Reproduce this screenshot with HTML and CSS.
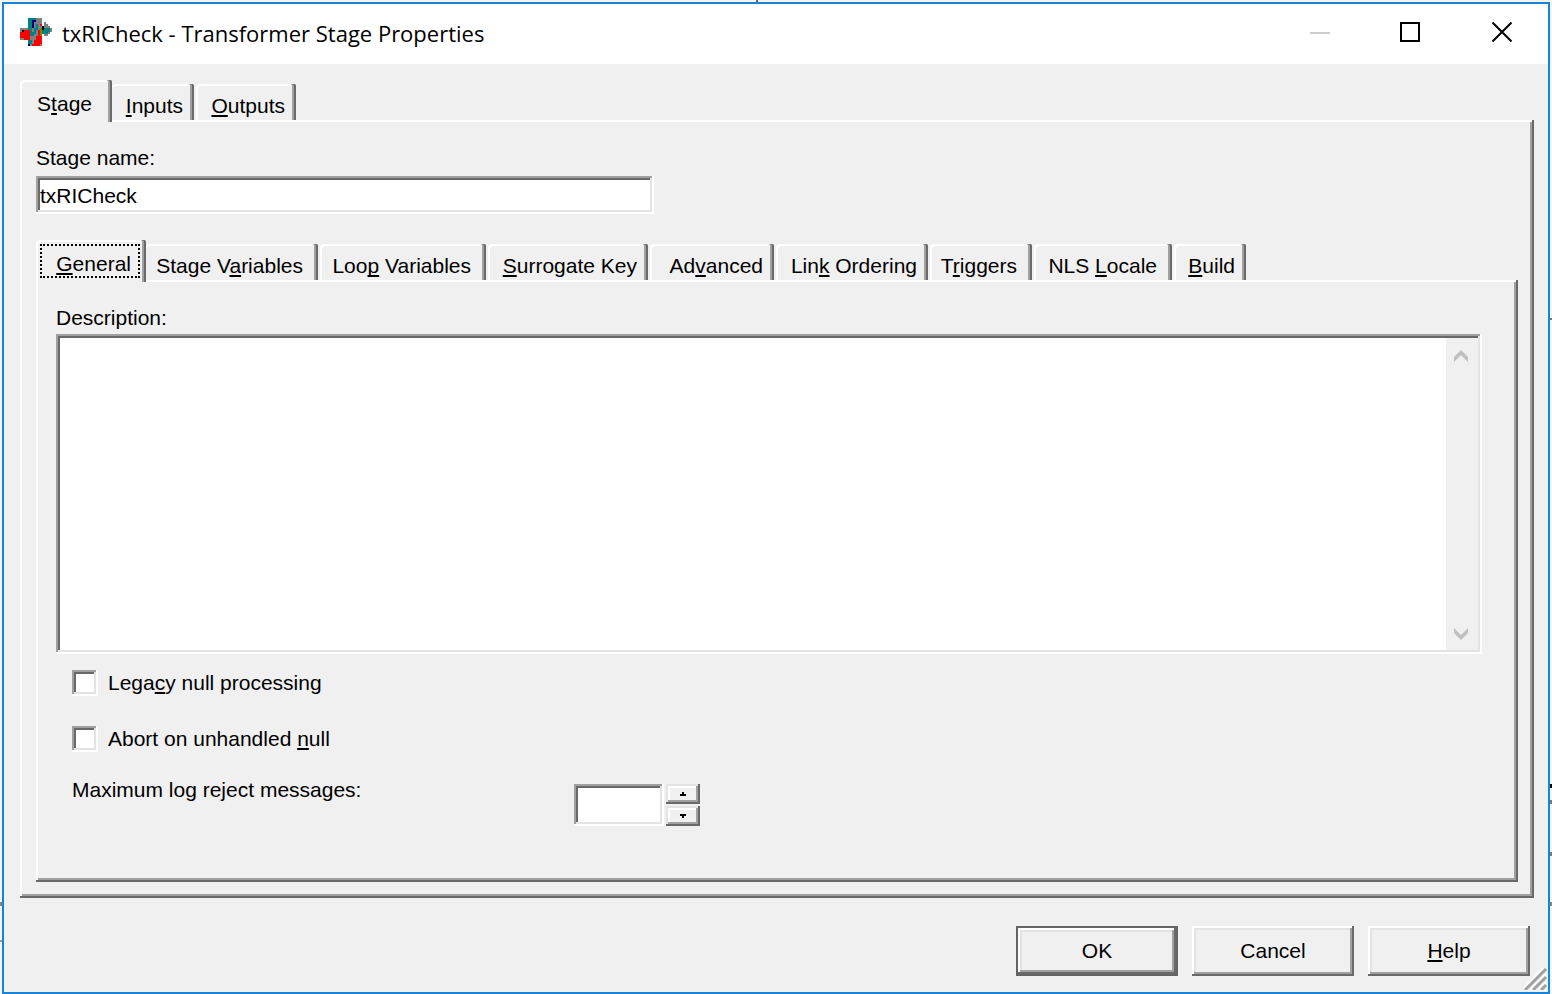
FILE: index.html
```html
<!DOCTYPE html>
<html lang="en">
<head>
<meta charset="utf-8">
<title>txRICheck - Transformer Stage Properties</title>
<link rel="stylesheet" href="styles.css">
</head>
<body>
<main class="window">
  <header class="titlebar">
    <svg class="app-icon" viewBox="0 0 16 14" shape-rendering="crispEdges" aria-hidden="true">
      <path fill="#808080" d="M0 5h5v6H0zM7 0h4v14H4V9h2V5h1zM12 2h1v1h1v1h1v1h1v2h-1v1h-1v1h-2z"/>
      <path fill="#008080" d="M4 0h4v1H7v3H6v3h1v2H5v1H4zM8 3h1v3H8v2H7V5h1zM4 10h1v1h1v2H4zM11 5h4v2h-1v1h-3z"/>
      <path fill="#f00" d="M1 6h4v5H2v-1H0V7h1zM10 3h1v1h-1zM9 6h1v3h1v4h-1v1H6v-1h1v-2h1V9h1z"/>
      <path fill="#000080" d="M6 1h2v1H7v3H6zM4 13h1v1H4z"/>
      <path fill="#808000" d="M10 5h1v4h-1z"/>
      <path fill="#000" d="M11 4h1v2h-1zM1 6h1v1H1z"/>
    </svg>
    <h1 class="title">txRICheck - Transformer Stage Properties</h1>
    <div class="caption-buttons">
      <button type="button" aria-label="Minimize" disabled><svg width="20" height="20" viewBox="0 0 20 20"><path fill="#ccc" d="M0 10h20v2H0z"/></svg></button>
      <button type="button" aria-label="Maximize"><svg width="20" height="20" viewBox="0 0 20 20"><path fill="none" stroke="#000" stroke-width="2" d="M1 1h18v18H1z"/></svg></button>
      <button type="button" aria-label="Close"><svg width="20" height="20" viewBox="0 0 20 20"><path fill="none" stroke="#000" stroke-width="2" d="M0.500 0.500l19 19M19.500 0.500l-19 19"/></svg></button>
    </div>
  </header>

  <div class="content">
    <div class="tabs" role="tablist">
      <button type="button" role="tab" class="tab active tab-stage" aria-selected="true">S<u>t</u>age</button>
      <button type="button" role="tab" class="tab after-active tab-inputs"><u>I</u>nputs</button>
      <button type="button" role="tab" class="tab tab-outputs"><u>O</u>utputs</button>
    </div>

    <section class="panel outer">
      <label class="label" for="stage-name">Stage name:</label>
      <input class="sunken stage-name" id="stage-name" type="text" value="txRICheck">

      <div class="tabs inner-tabs" role="tablist">
        <button type="button" role="tab" class="tab active focus tab-general roomy" aria-selected="true"><u>G</u>eneral</button>
        <button type="button" role="tab" class="tab after-active tab-variables roomy">Stage V<u>a</u>riables</button>
        <button type="button" role="tab" class="tab tab-loop roomy">Loo<u>p</u> Variables</button>
        <button type="button" role="tab" class="tab tab-key"><u>S</u>urrogate Key</button>
        <button type="button" role="tab" class="tab tab-advanced">Ad<u>v</u>anced</button>
        <button type="button" role="tab" class="tab tab-link">Lin<u>k</u> Ordering</button>
        <button type="button" role="tab" class="tab tab-triggers roomy">T<u>r</u>iggers</button>
        <button type="button" role="tab" class="tab tab-nls roomy">NLS <u>L</u>ocale</button>
        <button type="button" role="tab" class="tab tab-build"><u>B</u>uild</button>
      </div>

      <section class="panel inner">
        <label class="label" for="description">Description:</label>
        <div class="sunken description">
          <textarea id="description"></textarea>
          <div class="scrollbar">
            <svg width="16" height="12" viewBox="0 0 16 12"><path fill="#bfbfbf" d="M7 0l7 7v5L7 5l-7 7V7z"/></svg>
            <svg width="16" height="12" viewBox="0 0 16 12"><path fill="#bfbfbf" d="M7 12l7-7V0L7 7 0 0v5z"/></svg>
          </div>
        </div>
        <div class="check-row">
          <input class="sunken check" id="legacy" type="checkbox">
          <label for="legacy">Lega<u>c</u>y null processing</label>
        </div>
        <div class="check-row">
          <input class="sunken check" id="abort" type="checkbox">
          <label for="abort">Abort on unhandled <u>n</u>ull</label>
        </div>
        <div class="max-row">
          <label class="max-label" for="max-log">Maximum log reject messages:</label>
          <input class="sunken max-input" id="max-log" type="text">
          <div class="spinner">
            <button type="button" aria-label="Increase"><svg width="6" height="4" viewBox="0 0 6 4"><path d="M2 0h2v2h2v2H0V2h2z"/></svg></button>
            <button type="button" aria-label="Decrease"><svg width="6" height="4" viewBox="0 0 6 4"><path d="M0 0h6v2H4v2H2V2H0z"/></svg></button>
          </div>
        </div>
      </section>
    </section>

    <footer class="actions">
      <button type="button" class="button default">OK</button>
      <button type="button" class="button">Cancel</button>
      <button type="button" class="button"><u>H</u>elp</button>
    </footer>
  </div>
  <svg class="grip" width="24" height="22" viewBox="0 0 24 22" aria-hidden="true">
    <path stroke="#fff" stroke-width="2" d="M-1 21L21 -1M7 21L22 6M15 21L22 14"/>
    <path stroke="#a0a0a0" stroke-width="3" d="M1 22L22 1M9 22L22 9M17 22L22 17"/>
  </svg>
</main>
</body>
</html>
```
FILE: styles.css
```css
* {
  box-sizing: border-box;
}

body {
  margin: 0;
  background:
    linear-gradient(#666, #666) 756px 0 / 2px 2px no-repeat,
    linear-gradient(#000, #000) right 784px / 2px 4px no-repeat,
    linear-gradient(#777, #777) right 318px / 2px 2px no-repeat,
    linear-gradient(#777, #777) right 800px / 2px 4px no-repeat,
    linear-gradient(#777, #777) right 852px / 2px 4px no-repeat,
    linear-gradient(#888, #888) right 902px / 2px 4px no-repeat,
    linear-gradient(#888, #888) left 902px / 2px 4px no-repeat,
    linear-gradient(#999, #999) left 940px / 2px 2px no-repeat,
    #f4f4f4;
  color: #000;
  font: 21px/24px "Liberation Sans", Arial, sans-serif;
}

button,
input,
textarea {
  margin: 0;
  border: 0;
  padding: 0;
  border-radius: 0;
  background: none;
  color: inherit;
  font: inherit;
  outline: 0;
}

u {
  text-decoration-thickness: 2px;
  text-underline-offset: 2px;
  text-decoration-skip-ink: none;
}

.window {
  position: relative;
  display: flex;
  flex-direction: column;
  min-height: calc(100vh - 2px);
  margin: 2px 2px 0;
  border: 2px solid #1883d7;
  background: #f0f0f0;
}

.titlebar {
  display: flex;
  align-items: center;
  height: 60px;
  padding: 0 0 4px 16px;
  background: #fff;
}

.app-icon {
  width: 32px;
  height: 28px;
}

.title {
  flex: 1;
  margin: 0 0 0 10px;
  padding-top: 2px;
  font: 22px/30px "Open Sans", "Noto Sans", sans-serif;
}

.caption-buttons {
  display: flex;
}

.caption-buttons button {
  display: grid;
  place-items: center;
  width: 92px;
  height: 56px;
}

.caption-buttons button:first-child {
  width: 88px;
}

.content {
  display: flex;
  flex: 1;
  flex-direction: column;
  padding: 16px 14px 16px 16px;
}

.tabs {
  display: flex;
  align-items: flex-end;
  gap: 2px;
  height: 40px;
}

.tab {
  position: relative;
  height: 36px;
  padding: 8px 11px 0 0;
  border-radius: 4px 2px 0 0;
  background: #f0f0f0;
  box-shadow: inset -2px 0 #696969, inset -4px 0 #a0a0a0, inset 2px 2px #fff;
  line-height: 28px;
  text-align: right;
  white-space: nowrap;
}

.tab.roomy {
  padding-right: 15px;
}

.tab.after-active {
  margin-left: -2px;
  box-shadow: inset -2px 0 #696969, inset -4px 0 #a0a0a0, inset 0 2px #fff;
}

.tab.active {
  z-index: 1;
  height: 42px;
  margin-bottom: -2px;
  padding-top: 10px;
  padding-bottom: 4px;
}

.tab.tab-stage {
  width: 92px;
  padding-right: 20px;
}

.tab-inputs { width: 82px; }
.tab-outputs { width: 100px; }
.tab-general { width: 110px; }
.tab-variables { width: 172px; }
.tab-loop { width: 166px; }
.tab-key { width: 160px; }
.tab-advanced { width: 124px; }
.tab-link { width: 152px; }
.tab-triggers { width: 102px; }
.tab-nls { width: 138px; }
.tab-build { width: 72px; }

.tab.focus::after {
  position: absolute;
  inset: 4px 6px 4px 4px;
  border: 2px dotted #000;
  content: "";
}

.panel {
  display: flex;
  flex: 1;
  flex-direction: column;
  align-items: flex-start;
  box-shadow: inset -2px -2px #696969, inset 2px 2px #fff, inset -4px -4px #a0a0a0;
}

.outer {
  padding: 26px 16px 16px;
}

.inner {
  align-self: stretch;
  padding: 26px 36px 56px 20px;
}

.sunken {
  background: #fff;
  box-shadow: inset -2px -2px #fff, inset 2px 2px #a0a0a0, inset -4px -4px #e3e3e3, inset 4px 4px #696969;
}

.stage-name {
  width: 618px;
  height: 38px;
  margin-top: 6px;
  padding: 2px 4px 0;
}

.inner-tabs {
  margin-top: 26px;
}

.description {
  display: flex;
  flex: 1;
  align-self: stretch;
  margin-top: 4px;
  padding: 4px;
}

.description textarea {
  flex: 1;
  resize: none;
}

.scrollbar {
  display: flex;
  flex-direction: column;
  align-items: center;
  justify-content: space-between;
  width: 32px;
  padding: 12px 0 10px;
  background: #f0f0f0;
}

.check-row {
  display: flex;
  align-items: center;
  gap: 10px;
  margin: 16px 0 0 16px;
}

.check-row + .check-row {
  margin-top: 30px;
}

.check {
  width: 26px;
  height: 26px;
  appearance: none;
}

.max-row {
  display: flex;
  align-items: flex-start;
  margin: 26px 0 0 16px;
}

.max-label {
  width: 502px;
}

.max-input {
  width: 90px;
  height: 42px;
  margin-top: 6px;
  padding: 4px 6px;
}

.spinner {
  display: grid;
  gap: 2px;
  margin: 6px 0 0 2px;
}

.spinner button {
  display: grid;
  place-items: center;
  width: 34px;
  height: 20px;
  box-shadow: inset -2px -2px #696969, inset 2px 2px #e3e3e3, inset -4px -4px #a0a0a0, inset 4px 4px #fff;
}

.actions {
  display: flex;
  justify-content: flex-end;
  gap: 14px;
  padding: 28px 4px 0 0;
}

.button {
  width: 162px;
  height: 50px;
  box-shadow: inset -2px -2px #696969, inset 2px 2px #fff, inset -4px -4px #a0a0a0, inset 4px 4px #e3e3e3;
}

.button.default {
  box-shadow: inset 0 0 0 2px #646464, inset -4px -4px #696969, inset 4px 4px #fff, inset -6px -6px #a0a0a0, inset 6px 6px #e3e3e3;
}

.grip {
  position: absolute;
  right: 0;
  bottom: 2px;
}
```
